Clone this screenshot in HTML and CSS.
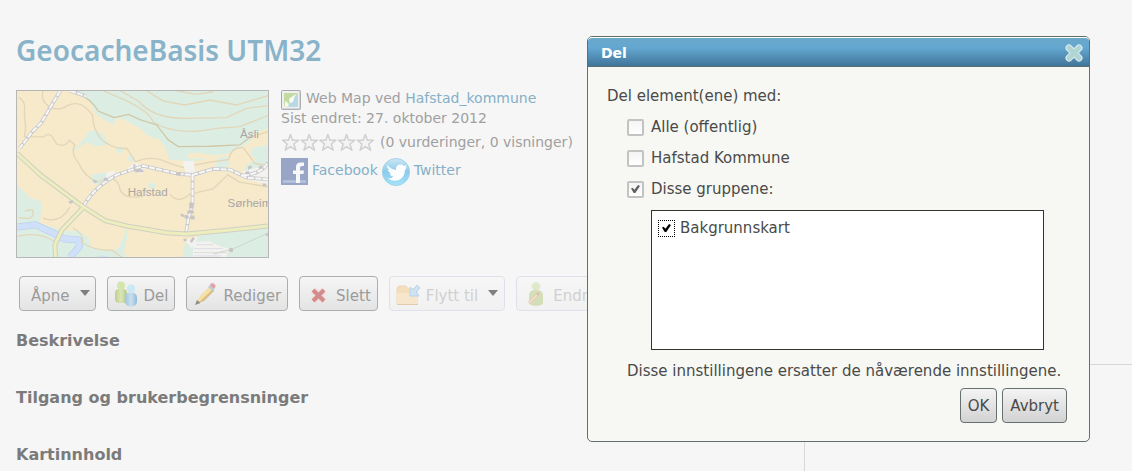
FILE: index.html
```html
<!DOCTYPE html>
<html lang="no">
<head>
<meta charset="utf-8">
<title>GeocacheBasis UTM32</title>
<link rel="stylesheet" href="styles.css">
</head>
<body>
<div class="page">
  <main class="content">
    <h1 class="title">GeocacheBasis UTM32</h1>
    <section class="summary">
      <svg class="thumb" viewBox="20 17 755 501" preserveAspectRatio="xMidYMid slice" role="img" aria-label="Kart over Hafstad">
        <rect x="20" y="17" width="755" height="501" fill="#f7eacb"/>
        <g fill="#dceee4">
          <path d="M178 17 L210 32 L240 50 L256 85 L290 110 L312 120 L316 98 L345 105 L390 130 L412 152 L450 165 L468 190 L478 224 L540 230 L600 222 L532 220 L536 204 L570 204 L620 212 L660 205 L715 175 L745 140 L775 130 L775 17 Z"/>
          <path d="M185 202 L215 170 L235 140 L262 136 L285 155 L292 180 L258 184 L230 172 Z"/>
          <path d="M775 180 L728 188 L722 208 L740 225 L712 238 L700 262 L775 275 Z"/>
          <path d="M618 248 L622 222 L648 212 L662 240 L640 250 Z"/>
          <path d="M240 290 L246 268 L300 262 L312 284 L262 300 Z"/>
          <path d="M316 192 L330 182 L340 200 L326 206 Z M352 222 L364 206 L374 220 L364 232 Z M412 302 L426 290 L440 302 L428 318 Z"/>
          <path d="M20 300 L60 340 L95 350 L88 415 L165 440 L205 437 L235 460 L245 490 L305 498 L325 490 L352 430 L354 444 L342 500 L346 518 L20 518 Z"/>
          <path d="M516 518 L525 478 L570 452 L775 430 L775 518 Z"/>
        </g>
        <path d="M258 518 Q275 506 295 518 Z" fill="#cfe0f8"/>
        <path d="M20 427 L75 420 L135 448 L160 462 L205 466 L208 485 L180 518" fill="none" stroke="#bccff0" stroke-width="21" stroke-linejoin="round"/>
        <path d="M20 427 L75 420 L135 448 L160 462 L205 466 L208 485 L180 518" fill="none" stroke="#cfe0f8" stroke-width="17" stroke-linejoin="round"/>
        <g fill="none" stroke="#e2d6b8" stroke-width="4">
          <path d="M24 36 Q48 48 42 80 L46 130 L42 155 L100 156 Q115 140 128 158 L140 178 Q165 188 178 166 L194 180 Q180 205 206 235 Q222 275 262 292 L300 278 Q330 290 330 316 Q345 345 400 334 M98 17 Q90 55 124 68 Q150 78 170 62 Q200 48 224 65 L248 90 Q246 130 275 165 Q315 195 350 190 L376 230 Q430 210 470 232 L518 248 L600 232 L656 224 Q665 185 700 188 Q722 215 735 236 L775 242"/>
          <path d="M480 328 Q505 360 540 328 L610 312 L654 270 L690 292 L775 306 M745 150 L775 140 M98 400 Q150 420 180 366 M24 398 Q80 410 66 375 L45 378 M20 455 Q90 440 130 470 M188 430 Q225 450 216 475 Q260 500 305 496 L335 518"/>
          <path d="M410 17 L460 48 L525 60 L600 45 L680 60 L775 32 M330 17 L385 48 Q430 100 520 100 L650 98 L710 70 L775 62 M280 17 L345 45 Q420 80 430 112 Q500 155 620 130 L690 125 L775 92 M500 17 L560 28 L610 20"/>
        </g>
        <path d="M190 17 Q245 42 264 78 L312 98 L355 88 L390 104 L440 120 L475 165 L505 185 L600 184 L690 180 L730 150" fill="none" stroke="#d0c8a4" stroke-width="4"/>
        <g fill="#f4f2ee">
          <path d="M352 252 L372 232 L410 246 L395 268 Z M518 230 L552 228 L556 270 L530 275 Z M286 288 L290 262 L312 258 L322 278 Z M550 472 L600 470 L628 485 L658 492 L648 518 L550 518 Z M700 260 L775 240 L775 300 L700 280 Z M525 465 L566 456 L545 490 Z"/>
        </g>
        <g fill="none" stroke="#c9c9cb" stroke-width="11">
          <path d="M150 17 L92 115 L66 140 L28 190 M220 365 Q250 308 320 270 L400 243 L510 268 L550 270 L610 252 L660 254 L710 278 L775 284 M548 270 L548 360 L536 400 L528 445 M180 17 L228 34 M700 272 Q760 265 775 232"/>
        </g>
        <g fill="none" stroke="#f8f8f8" stroke-width="6" stroke-dasharray="18 4">
          <path d="M150 17 L92 115 L66 140 L28 190 M220 365 Q250 308 320 270 L400 243 L510 268 L550 270 L610 252 L660 254 L710 278 L775 284 M548 270 L548 360 L536 400 L528 445 M180 17 L228 34 M700 272 Q760 265 775 232"/>
        </g>
        <g fill="none" stroke="#cfd0c4" stroke-width="15">
          <path d="M20 205 L90 270 L216 364 L285 408 L350 424 L470 444 L530 448 L640 438 L775 424 M218 370 L155 436 L134 480 L136 518"/>
        </g>
        <g fill="none" stroke="#eeedbd" stroke-width="9">
          <path d="M20 205 L90 270 L216 364 L285 408 L350 424 L470 444 L530 448 L640 438 L775 424 M218 370 L155 436 L134 480 L136 518"/>
        </g>
        <g fill="#c8c5c4">
          <path d="M370 238h6v14h16v8h-20z M376 254h24v8h-24z M250 284l12 4-5 7-9-5z M280 280l11-3 3 9-10 3z M498 262h15v9h-14z M174 350l14-4v8l-8 4z M538 355l8-3 6 8-4 12-10-2z M512 386l12 4 0 8-12-4z M532 378h20v8h-20z M526 390l10 4-4 10-8-4z M542 392h12v12h-12z M540 468l10-12 5 6-10 14z M520 464l10-3v9h-8z M714 246l10-5 3 8-11 6z M706 262l11-4 2 9-10 2z M746 246l10-5 3 8-10 4z M758 296h12v9h-10z"/>
          <circle cx="664" cy="496" r="7"/><circle cx="773" cy="449" r="5"/>
        </g>
        <path d="M560 480h50 M552 492h88 M552 504h100 M554 514h80" stroke="#dcdce8" stroke-width="3"/>
        <path d="M672 492L775 445M610 508L658 496" stroke="#cdd3cf" stroke-width="3"/>
        <g class="map-label">
          <text x="691" y="160">Åsli</text>
          <text x="353" y="335">Hafstad</text>
          <text x="653" y="366">Sørheim</text>
        </g>
      </svg>
      <div class="facts">
        <p class="fact">
          <svg class="doc-icon" viewBox="0 0 20 20" aria-hidden="true"><rect x=".5" y=".5" width="19" height="19" rx="1" fill="#f0f0f0" stroke="#a5a7aa"/><path d="M1 19h18V1" fill="none" stroke="#b8babd"/><rect x="3" y="3" width="14" height="14" fill="#d7e6b5"/><path d="M3 3h14l-6 4-2 5-6 3z" fill="#c5daa2"/><path d="M17 4v13H6l3-4 1-4 2 2 2-5z" fill="#b7d8e6"/><path d="M4 11l2 1 2 4-4 1z M8 9l4-3 3-2-2 4-1 4-3 1z" fill="#f9fcf4"/></svg>
          <span>Web Map ved <a href="#">Hafstad_kommune</a></span>
        </p>
        <p class="changed">Sist endret: 27. oktober 2012</p>
        <p class="rating">
          <svg class="stars" viewBox="0 0 94 19" aria-hidden="true" fill="#f3f3f3" stroke="#d0d0d0" stroke-width="1.500" stroke-linejoin="round"><path id="star" d="M9.500 1.500 L11.600 7.200 L17.600 7.200 L12.900 11 L14.800 17.200 L9.500 13.600 L4.200 17.200 L6.100 11 L1.400 7.200 L7.400 7.200 Z"/><use href="#star" x="18.700"/><use href="#star" x="37.400"/><use href="#star" x="56.100"/><use href="#star" x="74.800"/></svg>
          <span>(0 vurderinger, 0 visninger)</span>
        </p>
        <p class="social">
          <svg class="fb-icon" viewBox="0 0 27 27" aria-hidden="true"><rect width="27" height="27" fill="#98a5c7"/><path d="M2 23.500h23" stroke="#b9c3dc" stroke-width="2.500"/><path d="M15 25v-9h-3v-3.500h3V9q0-4.500 4.500-4.500h3.500v3.500h-2q-2 0-2 2v2.500h4l-.5 3.500H19v9z" fill="#f7f7fa"/></svg>
          <a href="#">Facebook</a>
          <svg class="tw-icon" viewBox="0 0 28 28" aria-hidden="true"><defs><linearGradient id="sky" x2="0" y2="1"><stop stop-color="#cbe7f4"/><stop offset=".5" stop-color="#8ccbeb"/><stop offset="1" stop-color="#a5e4fb"/></linearGradient></defs><circle cx="14" cy="14" r="13.600" fill="url(#sky)" stroke="#99cde5" stroke-width=".8"/><path d="M5 7q4 4.500 9 5-.500-5 4-5.500 2.500-.2 3.800 1.400l3-1-1.300 2.500 1.500.2-2 2.200q-.2 7-5.500 10-6 2.500-11.500-1.200 4 0 5.500-2-3-.5-4-3l2-.2Q6 14 5.800 11.500l2 .5Q4.500 9.500 5 7z" fill="#fbfdfe"/></svg>
          <a href="#">Twitter</a>
        </p>
      </div>
    </section>
    <div class="toolbar">
      <button class="tool menu" type="button"><span>Åpne</span><span class="caret"></span></button>
      <button class="tool" type="button">
        <svg class="tool-icon" viewBox="0 0 24 26" aria-hidden="true"><defs><linearGradient id="green"><stop stop-color="#bfd08c"/><stop offset=".5" stop-color="#dbe6b9"/><stop offset="1" stop-color="#b5c78a"/></linearGradient><linearGradient id="blue"><stop stop-color="#9dc5dd"/><stop offset=".5" stop-color="#c9e1ef"/><stop offset="1" stop-color="#93bbd8"/></linearGradient></defs><circle cx="7" cy="4.500" r="4" fill="#d5e5b0"/><rect x="1" y="8" width="12" height="14" rx="4" fill="url(#green)"/><circle cx="17" cy="7.500" r="4" fill="#cae9f5"/><rect x="11" y="11.500" width="12" height="14" rx="5" fill="url(#blue)"/></svg>
        <span>Del</span></button>
      <button class="tool" type="button">
        <svg class="tool-icon" viewBox="0 0 24 26" aria-hidden="true"><path d="M3 23L7 15 17 5l4 4L11 19z" fill="#f4dfa5"/><path d="M9 18.500L20 8l1.500 1.500L11 20 5 22z" fill="#d8bd84"/><path d="M15 6l3-3 4 4-2.500 3z" fill="#bfccd8"/><path d="M17 3.500l2-1.500q4 1 3.500 4l-2 1.800z" fill="#e6a0a4"/><path d="M2 24l2-5 3.500 3z" fill="#908b86"/></svg>
        <span>Rediger</span></button>
      <button class="tool" type="button">
        <svg class="tool-icon" viewBox="0 0 24 26" aria-hidden="true"><path d="M7.500 9.500l10 10M17.500 9.500l-10 10" stroke="#f0dcdc" stroke-width="7"/><path d="M7 9l11 11M18 9L7 20" stroke="#d28c8c" stroke-width="4"/></svg>
        <span>Slett</span></button>
      <button class="tool" type="button" disabled>
        <svg class="tool-icon" viewBox="0 0 24 26" aria-hidden="true"><path d="M1 23V7l2-2h7l2 3h9v15z" fill="#f4d9ae" stroke="#ecd0a8"/><path d="M1 12h20v11H1z" fill="#f8e4c2"/><path d="M1 23.500h21" stroke="#ddc19b"/><path d="M14 15V6l3 3 4-5 3 3-4 4 3 4z" fill="#c5e1f3" stroke="#a9cde5"/></svg>
        <span>Flytt til</span><span class="caret"></span></button>
      <button class="tool" type="button" disabled>
        <svg class="tool-icon" viewBox="0 0 24 26" aria-hidden="true"><circle cx="13" cy="5.500" r="4.200" fill="#dae6c0"/><path d="M6 14q0-5 7-5t7 5v9q-7 4-14 0z" fill="#cddaaa"/><path d="M6 22L16 12" stroke="#d9b4a0" stroke-width="3"/><path d="M6 22l8-8" stroke="#f1ddb6" stroke-width="2"/></svg>
        <span>Endre eier</span></button>
    </div>
    <div class="sections">
      <h2 class="heading">Beskrivelse</h2>
      <h2 class="heading">Tilgang og brukerbegrensninger</h2>
      <h2 class="heading">Kartinnhold</h2>
    </div>
  </main>
  <aside class="side"></aside>
</div>

<div class="dialog" role="dialog" aria-labelledby="dialog-title">
  <header class="dialog-bar">
    <span id="dialog-title">Del</span>
    <button class="close" type="button" aria-label="Lukk"><svg viewBox="0 0 20 20" aria-hidden="true"><path d="M5 5l10 10M15 5L5 15" stroke="#dcecee" stroke-width="7" stroke-linecap="round"/><path d="M5 5l10 10M15 5L5 15" stroke="#b1d5d5" stroke-width="5" stroke-linecap="round"/></svg></button>
  </header>
  <form class="dialog-body">
    <p class="lead">Del element(ene) med:</p>
    <div class="options">
      <label class="option"><input class="check" type="checkbox"><span>Alle (offentlig)</span></label>
      <label class="option"><input class="check" type="checkbox"><span>Hafstad Kommune</span></label>
      <label class="option"><input class="check" type="checkbox" checked><span>Disse gruppene:</span></label>
      <div class="groups">
        <label class="group"><input class="group-check" type="checkbox" checked><span>Bakgrunnskart</span></label>
      </div>
      <p class="note">Disse innstillingene ersatter de nåværende innstillingene.</p>
    </div>
    <div class="actions">
      <button class="action" type="button">OK</button>
      <button class="action" type="button">Avbryt</button>
    </div>
  </form>
</div>
</body>
</html>
```
FILE: styles.css
```css
* { box-sizing: border-box; }

body {
  margin: 0;
  background: #f6f6f6;
  color: #a0a0a0;
  font: 14px/20px Verdana, "DejaVu Sans", sans-serif;
}

h1, h2, p { margin: 0; }
a { color: #85b0c7; text-decoration: none; }
button, input { font: inherit; margin: 0; }

.page {
  display: grid;
  grid-template-columns: minmax(0, 1fr) 328px;
  min-height: 100vh;
}

.content { padding: 32px 0 0 16px; min-width: 0; overflow: hidden; }

.side {
  margin-top: 364px;
  border-top: 1px solid #d8d8d8;
  border-left: 1px solid #d8d8d8;
}

.title {
  color: #89b3c9;
  font: 600 28px/36px "Noto Sans", sans-serif;
}

.summary { display: flex; gap: 12px; margin-top: 22px; }

.thumb {
  width: 253px;
  height: 168px;
  flex: none;
  border: 1px solid #b6b6b6;
}

.map-label { fill: #aaa6a4; font: 35px "Liberation Sans", sans-serif; }

.facts { display: flex; flex-direction: column; }
.fact, .rating, .social { display: flex; align-items: center; }
.fact { gap: 5px; height: 20px; align-items: flex-start; line-height: 16px; }
.changed { line-height: 16px; }
.rating { gap: 5px; height: 32px; }
.social { gap: 4px; height: 28px; line-height: 24px; align-items: flex-start; }
.doc-icon, .stars, .fb-icon, .tw-icon, .tool-icon { flex: none; }
.doc-icon { width: 20px; height: 20px; }
.stars { width: 94px; height: 19px; }
.fb-icon { width: 27px; height: 27px; }
.tw-icon { width: 28px; height: 28px; }

.toolbar { display: flex; gap: 11px; margin: 18px 0 0 3px; }

.tool {
  display: flex;
  align-items: center;
  flex: none;
  gap: 6px;
  height: 35px;
  padding: 4px 6px 0;
  border: 1px solid #aaafae;
  border-radius: 4px;
  background: linear-gradient(#f5f5f5, #e4e4e4);
  color: #9b9b9b;
  font-size: 15px;
  white-space: nowrap;
}

.tool.menu { padding: 4px 5px 0 11px; }
.tool:disabled { border-color: #e0e0ea; background: linear-gradient(#f6f6f6, #f1f1f2); color: #d0d0d0; }
.tool-icon { width: 24px; height: 26px; margin-bottom: 4px; }
.tool:disabled .tool-icon { opacity: .8; }

.caret {
  border: 5px solid transparent;
  border-top: 6px solid #7f7f7f;
  border-bottom: 0;
  margin: 0 0 6px 4px;
}

.sections { display: flex; flex-direction: column; gap: 37px; margin-top: 20px; }

.heading {
  color: #7b7b7b;
  font-size: 16px;
  line-height: 20px;
}

.dialog {
  position: absolute;
  top: 36px;
  right: 42px;
  width: 503px;
  border: 1px solid #626f6d;
  border-radius: 5px;
  background: #f7f8f3;
  color: #4a4a4a;
  font-size: 15px;
}

.dialog-bar {
  display: flex;
  align-items: center;
  justify-content: space-between;
  height: 30px;
  padding: 2px 5px 0 13px;
  border-top: 1px solid #fff;
  border-bottom: 1px solid #5b6f75;
  border-radius: 4px 4px 0 0;
  background: linear-gradient(#6ba8ca, #63a7d1 35%, #41759a);
  color: #fff;
  font-size: 14px;
  font-weight: bold;
}

.close { width: 20px; height: 22px; padding: 0; border: 0; background: none; }
.close svg { display: block; width: 20px; height: 20px; }

.dialog-body { padding: 19px 22px 18px 19px; }
.options { padding: 11px 0 0 20px; }
.option, .group { display: flex; align-items: center; }
.option { gap: 7px; margin-bottom: 11px; }

.check, .group-check {
  appearance: none;
  width: 17px;
  height: 17px;
  flex: none;
  background: linear-gradient(#f4f4f4, #fff);
  border: 2px solid #c2c3c3;
  border-radius: 2px;
  display: grid;
  place-items: center;
}

.check:checked::before, .group-check:checked::before {
  content: "";
  width: 9px;
  height: 8px;
  background: #606060;
  clip-path: polygon(0 45%, 18% 35%, 38% 60%, 78% 0, 100% 12%, 48% 100%, 30% 100%);
}

.group-check {
  border: 1px dotted #000;
  border-radius: 0;
  background: #fff;
}
.group-check:checked::before { background: #000; }

.groups {
  height: 140px;
  margin: 0 23px 11px 24px;
  padding: 7px 6px;
  border: 1px solid #333;
  background: #fff;
}
.group { gap: 5px; }
.note { white-space: nowrap; }

.actions { display: flex; justify-content: flex-end; gap: 5px; margin-top: 7px; }

.action {
  height: 35px;
  padding: 0 7px;
  border: 1px solid #65706f;
  border-radius: 4px;
  background: linear-gradient(#f4f4f4, #d2d2d2);
  color: #4a4a4a;
}
```
